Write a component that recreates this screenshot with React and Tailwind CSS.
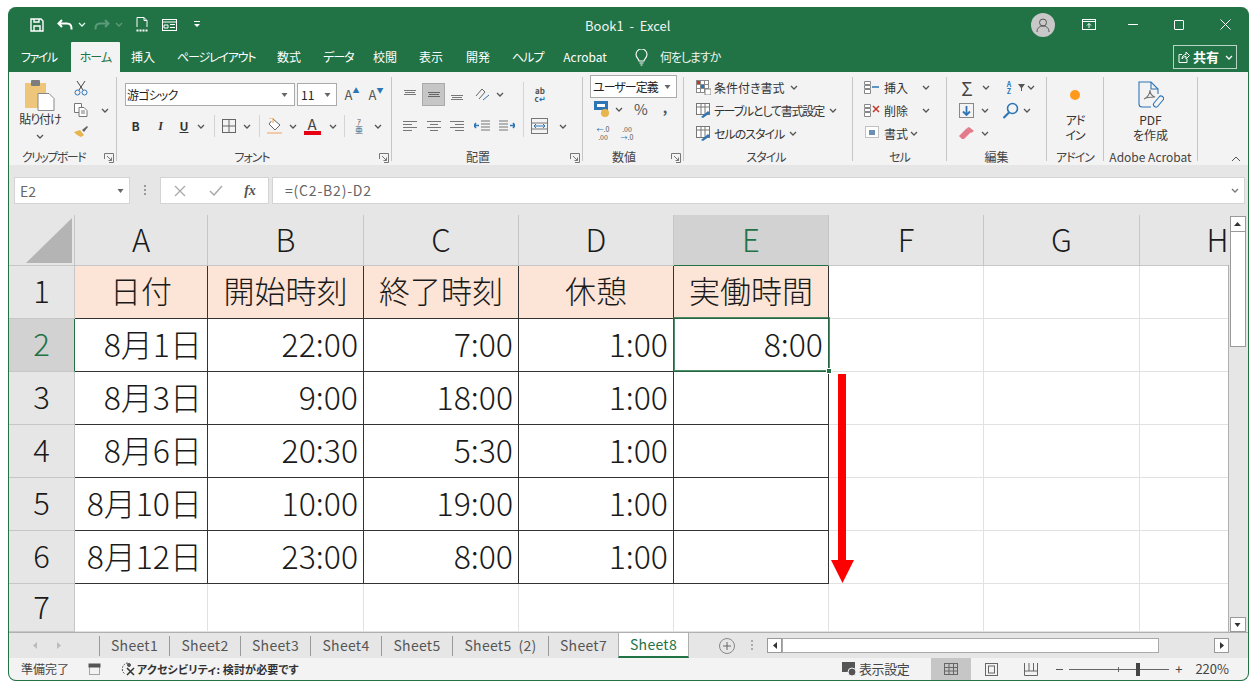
import React from 'react';

// small chevron used all over the ribbon
const Chev = ({ color = '#555' }) => (
  <svg width="8" height="5" viewBox="0 0 8 5" fill="none" stroke={color} strokeWidth="1.3"><path d="M1 1l3 3 3-3" /></svg>
);
const Tri = ({ color = '#666' }) => (
  <svg width="7" height="4" viewBox="0 0 7 4" fill={color}><path d="M.5 0h6L3.5 4z" /></svg>
);
const Launcher = () => (
  <svg width="10" height="10" viewBox="0 0 10 10" fill="none" stroke="#777" className="absolute right-[2px] top-[76px]">
    <path d="M.5 6V.5H9.5V9.5H5" /><path d="M3 3l4.5 4.5M7.5 4.5v3h-3" />
  </svg>
);
const Slot = ({ w, children, className = '' }) => (
  <div className={`flex items-center justify-center shrink-0 ${w} ${className}`}>{children}</div>
);

function Lines({ rows, color = '#777' }) {
  return (
    <svg width="14" height="12" viewBox="0 0 14 12" fill="none" stroke={color}>
      {rows.map((r, i) => <path key={i} d={`M${r[0]} ${r[1] + 0.5}H${r[2]}`} />)}
    </svg>
  );
}

function TitleBar() {
  return (
    <div className="h-[35px] flex items-center text-white shrink-0 relative pl-[20px]">
      <Slot w="w-[16px]">
        <svg width="14" height="14" viewBox="0 0 14 14" fill="none" stroke="#fff" strokeWidth="1.4"><path d="M1 1h10l2 2v10H1z" /><path d="M4 13V8h6v5M4 1v3h5V1" /></svg>
      </Slot>
      <Slot w="w-[18px]" className="ml-[11px]">
        <svg width="16" height="12" viewBox="0 0 16 12" fill="none" stroke="#fff" strokeWidth="2"><path d="M5 1L1.5 4.500 5 8M2 4.500h8c3 0 4.500 2 4.500 5v1" /></svg>
      </Slot>
      <Slot w="w-[16px]"><Chev color="#dfe" /></Slot>
      <Slot w="w-[22px]" className="ml-[1px]">
        <svg width="16" height="12" viewBox="0 0 16 12" fill="none" stroke="#5c9a7a" strokeWidth="2"><path d="M11 1l3.500 3.500L11 8M14 4.500H6C3 4.500 1.500 6.500 1.500 9.500v1" /></svg>
      </Slot>
      <Slot w="w-[12px]"><Chev color="#5c9a7a" /></Slot>
      <Slot w="w-[34px]">
        <svg width="12" height="15" viewBox="0 0 12 15" fill="none" stroke="#fff"><path d="M1 10V.5h7l3 3V10M8 .5v3h3" /><path d="M.5 13.500h11" strokeWidth="2" strokeDasharray="2 1" /></svg>
      </Slot>
      <Slot w="w-[20px]">
        <svg width="15" height="12" viewBox="0 0 15 12" fill="none" stroke="#fff"><rect x=".5" y=".5" width="14" height="11" /><path d="M1 3h13M8 5.500h5M8 8.500h5M2 6h4v3H2z" /></svg>
      </Slot>
      <Slot w="w-[36px]">
        <svg width="6" height="7" viewBox="0 0 6 7" fill="#fff"><path d="M0 0h6v1H0zM0 3h6L3 6z" /></svg>
      </Slot>
      <div className="absolute left-[576px] top-[11px] text-[13px] leading-[16px] whitespace-pre text-[#f0f5f2]">Book1  -  Excel</div>
      <div className="ml-auto flex items-center">
        <div className="w-[24px] h-[24px] rounded-full bg-[#c8c8c8] flex items-center justify-center mr-[9px]">
          <svg width="16" height="16" viewBox="0 0 16 16" fill="none" stroke="#555"><circle cx="8" cy="5.500" r="3.500" /><path d="M2 15c0-4 2.500-6 6-6s6 2 6 6" /></svg>
        </div>
        <Slot w="w-[46px]" className="pl-[3px]">
          <svg width="14" height="11" viewBox="0 0 14 11" fill="none" stroke="#fff"><rect x=".5" y=".5" width="13" height="10" /><path d="M.5 2.500h13" /><path d="M7 9V4.500M5 6.500l2-2 2 2" /></svg>
        </Slot>
        <Slot w="w-[46px]"><div className="w-[10px] h-[1px] bg-white" /></Slot>
        <Slot w="w-[46px]"><div className="w-[10px] h-[10px] border border-white rounded-[1px]" /></Slot>
        <Slot w="w-[46px]">
          <svg width="11" height="11" viewBox="0 0 11 11" stroke="#fff"><path d="M.5.5l10 10M10.500.5l-10 10" /></svg>
        </Slot>
      </div>
    </div>
  );
}

function TabBar() {
  const tabs = [
    ['ファイル', 'ml-[12px] w-[34px] tracking-[-1.5px]'],
    ['挿入', 'ml-[76px] w-[24px]'],
    ['ページレイアウト', 'ml-[22px] w-[78px] tracking-[-1.2px]'],
    ['数式', 'ml-[22px] w-[23px]'],
    ['データ', 'ml-[23px] w-[28px] tracking-[-1px]'],
    ['校閲', 'ml-[22px] w-[23px]'],
    ['表示', 'ml-[23px] w-[24px]'],
    ['開発', 'ml-[23px] w-[24px]'],
    ['ヘルプ', 'ml-[22px] w-[29px] tracking-[-1px]'],
    ['Acrobat', 'ml-[21px] w-[46px]'],
  ];
  return (
    <div className="h-[30px] flex items-center text-[12px] text-white shrink-0 relative whitespace-nowrap">
      {tabs.map(([t, c]) => <div key={t} className={`${c} text-center leading-[16px]`}>{t}</div>)}
      <div className="absolute left-[62px] top-0 w-[49px] h-[30px] bg-[#f3f3f3] text-[#217346] flex items-center justify-center tracking-[-1px] rounded-t-[1px]">ホーム</div>
      <div className="ml-[26px] w-[14px] flex justify-center">
        <svg width="13" height="17" viewBox="0 0 13 17" fill="none" stroke="#fff" strokeWidth="1.1"><path d="M4 12c0-2-3-3-3-6.500a5.500 5.500 0 0111 0C12 9 9 10 9 12zM4.500 14h4M5.500 16h2" /></svg>
      </div>
      <div className="ml-[12px] text-[#eef5f1] tracking-[-1.1px]">何をしますか</div>
      <div className="absolute left-[1164px] top-[3px] w-[64px] h-[24px] border border-[#b9d3c5] flex items-center pl-[4px] gap-[3px]">
        <svg width="12" height="12" viewBox="0 0 12 12" fill="none" stroke="#fff"><path d="M4 3.500H1v8h8V8" /><path d="M4 8c0-3 2-4.500 4-4.500V1l3.500 3.500L8 8V5.500C6 5.500 5 6.500 4 8z" /></svg>
        <span className="font-bold text-[13px]">共有</span>
        <span className="ml-[3px]"><Chev color="#fff" /></span>
      </div>
    </div>
  );
}

function Group({ w, label, launcher, children, noBorder }) {
  return (
    <div className={`${w} h-[84px] my-[5px] shrink-0 relative flex flex-col ${noBorder ? '' : 'border-r border-[#c6c6c6]'}`}>
      <div className="flex-1 min-h-0 relative">{children}</div>
      <div className="h-[14px] mb-[-3px] text-[12px] leading-[14px] text-center text-[#444] whitespace-nowrap">{label}</div>
      {launcher && <Launcher />}
    </div>
  );
}

const Row = ({ className = '', children }) => <div className={`flex items-center ${className}`}>{children}</div>;

function ClipboardGroup() {
  return (
    <Group w="w-[108px]" label={<span className="pr-[18px] tracking-[-1.5px]">クリップボード</span>} launcher>
      <div className="flex">
        <div className="w-[54px] ml-[4px] flex flex-col items-center pt-[3px]">
          <svg width="32" height="31" viewBox="0 0 32 31">
            <rect x="1" y="3" width="21" height="25" fill="#eec679" />
            <rect x="7" y="0" width="9" height="6" rx="1" fill="#7d7d7d" />
            <path d="M14 13.500h11l5 5v12H14z" fill="#fff" stroke="#888" />
          </svg>
          <div className="text-[12px] leading-[14px] text-[#333] mt-[1px] tracking-[-1px] whitespace-nowrap">貼り付け</div>
          <div className="mt-[8px]"><Chev /></div>
        </div>
        <div className="w-[20px] ml-[4px] flex flex-col items-center pt-[3px] gap-[7px]">
          <svg width="14" height="16" viewBox="0 0 14 16" fill="none" stroke="#444"><path d="M3 1l6 9M11 1L5 10" /><circle cx="3.500" cy="12.500" r="2.500" stroke="#2e75b6" /><circle cx="10.500" cy="12.500" r="2.500" stroke="#2e75b6" /></svg>
          <svg width="14" height="14" viewBox="0 0 14 14" fill="#fff" stroke="#777"><path d="M.5.500h7v9h-7z" /><path d="M5 4.500h5l3 3v6H5z" /><path d="M7 8h4M7 10h4" /></svg>
          <svg width="14" height="12" viewBox="0 0 14 12" className="mt-[2px]"><path d="M0 6l6-2 4 5-3 2C4 10 2 8 0 6z" fill="#e8b44c" /><path d="M8 4l5-4 1 1-4 5z" fill="#666" /></svg>
        </div>
        <div className="pt-[31px] pl-[10px]"><Chev /></div>
      </div>
    </Group>
  );
}

function FontGroup() {
  return (
    <Group w="w-[275px]" label={<span className="pr-[4px] tracking-[-1px]">フォント</span>} launcher>
      <Row className="pl-[8px] pt-[6px]">
        <div className="w-[170px] h-[23px] bg-white border border-[#ababab] flex items-center pl-[1px] pr-[6px] justify-between text-[12px] text-[#222] tracking-[-.8px]">
          游ゴシック<Tri />
        </div>
        <div className="ml-[2px] w-[40px] h-[23px] bg-white border border-[#ababab] flex items-center pl-[3px] pr-[5px] justify-between text-[12px] text-[#222]">
          11<Tri />
        </div>
        <Slot w="w-[24px]" className="ml-[3px] text-[13px] text-[#555]">A<span className="text-[7px] text-[#2e75b6] mb-[8px]">▲</span></Slot>
        <Slot w="w-[24px]" className="text-[13px] text-[#555]">A<span className="text-[7px] text-[#2e75b6] mb-[8px]">▼</span></Slot>
      </Row>
      <Row className="pl-[6px] mt-[8px] h-[24px] text-[#333] text-[12px]">
        <Slot w="w-[25px]" className="font-bold">B</Slot>
        <Slot w="w-[25px]" className="italic font-bold font-['Liberation_Serif']">I</Slot>
        <Slot w="w-[22px]" className="font-bold underline">U</Slot>
        <Slot w="w-[12px]"><Chev /></Slot>
        <div className="w-[1px] h-[22px] bg-[#d4d4d4] ml-[7px]" />
        <Slot w="w-[28px]">
          <svg width="14" height="14" viewBox="0 0 14 14" fill="none" stroke="#666"><rect x=".5" y=".5" width="13" height="13" /><path d="M7 0v14M0 7h14" /></svg>
        </Slot>
        <Slot w="w-[8px]"><Chev /></Slot>
        <div className="w-[1px] h-[22px] bg-[#d4d4d4] ml-[8px]" />
        <Slot w="w-[28px]" className="flex-col">
          <svg width="15" height="14" viewBox="0 0 15 14" fill="#fff" stroke="#666"><path d="M6 1l7 6-5 5-6-6z" /><path d="M2 0h4v5" stroke="#e8a03c" /></svg>
          <div className="w-[15px] h-[2px] bg-[#f4c9a8]" />
        </Slot>
        <Slot w="w-[10px]"><Chev /></Slot>
        <Slot w="w-[28px]" className="flex-col">
          <span className="text-[15px] leading-[14px] text-[#444]">A</span>
          <div className="w-[17px] h-[4px] bg-[#e60012]" />
        </Slot>
        <Slot w="w-[13px]"><Chev /></Slot>
        <div className="w-[1px] h-[22px] bg-[#d4d4d4] ml-[5px]" />
        <Slot w="w-[28px]" className="flex-col text-[8px] leading-[8px] text-[#555]"><span>ｱ</span><span>亜</span></Slot>
        <Slot w="w-[10px]"><Chev /></Slot>
      </Row>
    </Group>
  );
}

function AlignGroup() {
  const top = [[1, 1, 13], [2, 3, 12], [1, 5, 13]];
  const mid = [[1, 3, 13], [2, 5, 12], [1, 7, 13]];
  const low = [[1, 6, 13], [2, 8, 12], [1, 10, 13]];
  const left = [[0, 1, 14], [0, 4, 9], [0, 7, 14], [0, 10, 9]];
  const center = [[0, 1, 14], [3, 4, 11], [0, 7, 14], [3, 10, 11]];
  const right = [[0, 1, 14], [5, 4, 14], [0, 7, 14], [5, 10, 14]];
  return (
    <Group w="w-[191px]" label={<span className="pr-[18px]">配置</span>} launcher>
      <div className="flex h-full">
        <div className="w-[131px] pl-[6px] pt-[6px] flex flex-col gap-[8px]">
          <Row>
            <Slot w="w-[24px]"><Lines rows={top} /></Slot>
            <Slot w="w-[23px] h-[23px] bg-[#c6c6c6] border border-[#aaa]"><Lines rows={mid} color="#666" /></Slot>
            <Slot w="w-[24px]"><Lines rows={low} /></Slot>
            <Slot w="w-[26px]">
              <svg width="16" height="15" viewBox="0 0 16 15" fill="none" stroke="#666"><path d="M2 9l6-7 3 3-6 7" /><path d="M9 13l6-5" stroke="#2e75b6" /></svg>
            </Slot>
            <Slot w="w-[10px]"><Chev /></Slot>
          </Row>
          <Row className="h-[24px]">
            <Slot w="w-[24px]"><Lines rows={left} /></Slot>
            <Slot w="w-[23px]"><Lines rows={center} /></Slot>
            <Slot w="w-[24px]"><Lines rows={right} /></Slot>
            <Slot w="w-[25px]">
              <svg width="16" height="13" viewBox="0 0 16 13" fill="none"><path d="M7 1h9M7 4h9M7 7h9M7 10h9" stroke="#777" /><path d="M5 5.500H0M2 3L0 5.500 2 8" stroke="#2e75b6" strokeWidth="1.500" /></svg>
            </Slot>
            <Slot w="w-[25px]">
              <svg width="16" height="13" viewBox="0 0 16 13" fill="none"><path d="M0 1h9M0 4h9M0 7h9M0 10h9" stroke="#777" /><path d="M11 5.500h5M14 3l2 2.500L14 8" stroke="#2e75b6" strokeWidth="1.500" /></svg>
            </Slot>
          </Row>
        </div>
        <div className="w-[1px] h-[55px] mt-[5px] bg-[#d4d4d4]" />
        <div className="flex-1 pt-[6px] flex flex-col gap-[8px]">
          <Slot w="w-[32px]" className="h-[23px] flex-col text-[8px] leading-[8px] font-bold text-[#555]">
            <span>ab</span><span>c<span className="text-[#2e75b6]">↵</span></span>
          </Slot>
          <Row className="h-[24px]">
            <Slot w="w-[30px]">
              <svg width="17" height="16" viewBox="0 0 17 16" fill="none" stroke="#777"><rect x=".5" y=".5" width="16" height="15" /><path d="M0 5h17M0 11h17" /><path d="M3 8h11M5 6l-2 2 2 2M12 6l2 2-2 2" stroke="#2e75b6" /></svg>
            </Slot>
            <Slot w="w-[16px]" className="ml-[1px]"><Chev /></Slot>
          </Row>
        </div>
      </div>
    </Group>
  );
}

function NumberGroup() {
  return (
    <Group w="w-[101px]" label={<span className="pr-[18px]">数値</span>} launcher>
      <div className="ml-[7px] w-[87px] h-[23px] bg-white border border-[#ababab] flex items-center pl-[2px] pr-[5px] justify-between text-[12px] text-[#222] mt-[-2px] tracking-[-1px] whitespace-nowrap">
        ユーザー定義<Tri />
      </div>
      <Row className="pl-[10px] mt-[1px] h-[21px]">
        <Slot w="w-[18px]">
          <svg width="17" height="17" viewBox="0 0 17 17"><rect x="0" y="0" width="14" height="9" fill="#2e75b6" /><rect x="3" y="3" width="8" height="3" fill="#fff" /><circle cx="11" cy="12" r="4" fill="#e8b44c" /></svg>
        </Slot>
        <Slot w="w-[16px]"><Chev /></Slot>
        <Slot w="w-[28px]" className="text-[15px] text-[#555]">%</Slot>
        <Slot w="w-[18px]" className="font-bold text-[14px] text-[#555] ml-[1px] mb-[5px]">,</Slot>
      </Row>
      <Row className="pl-[9px] mt-[3px] h-[20px]">
        <Slot w="w-[22px]" className="flex-col text-[7px] leading-[8px] text-[#555]"><span><span className="text-[#2e75b6]">←</span>.0</span><span>.00</span></Slot>
        <Slot w="w-[26px]" className="flex-col text-[7px] leading-[8px] text-[#555]"><span>.00</span><span><span className="text-[#2e75b6]">→</span>.0</span></Slot>
      </Row>
    </Group>
  );
}

const StyleIcon = () => (
  <svg width="15" height="15" viewBox="0 0 15 15" fill="#fff" stroke="#777"><rect x=".5" y=".5" width="13" height="11" /><path d="M.5 4h13M5 .5v11M9 .5v11" /><path d="M5 14l7-6 2 2-7 5z" fill="#2e75b6" stroke="none" /></svg>
);

function StylesGroup() {
  return (
    <Group w="w-[169px]" label={<span className="pr-[4px] tracking-[-1px]">スタイル</span>}>
      <div className="pl-[12px] mt-[-1px] flex flex-col text-[12px] text-[#333] whitespace-nowrap">
        <Row className="h-[23px] gap-[3px]">
          <svg width="15" height="15" viewBox="0 0 15 15" fill="#fff" stroke="#888"><rect x=".5" y=".5" width="12" height="12" /><path d="M.5 4.500h12M.5 8.500h12M4.500.500v12M8.500.500v12" /><rect x="1" y="1" width="3" height="3" fill="#c0392b" stroke="none" /><rect x="5" y="5" width="3" height="3" fill="#2e75b6" stroke="none" /><rect x="9" y="9" width="6" height="6" fill="#fff" /></svg>
          条件付き書式<span className="ml-[2px]"><Chev /></span>
        </Row>
        <Row className="h-[23px] gap-[3px]"><StyleIcon /><span className="tracking-[-1.2px]">テーブルとして書式設定</span><span className="ml-[2px]"><Chev /></span></Row>
        <Row className="h-[23px] gap-[3px]"><StyleIcon /><span className="tracking-[-1px]">セルのスタイル</span><span className="ml-[2px]"><Chev /></span></Row>
      </div>
    </Group>
  );
}

const CellIcon = ({ mark }) => (
  <svg width="17" height="15" viewBox="0 0 17 15" fill="#fff" stroke="#888"><path d="M.5 1.500h6v3h-6zM.5 5.500h6v3h-6zM.5 9.500h6v4h-6z" />{mark === 'x'
    ? <path d="M9 3l6 6M15 3l-6 6" stroke="#c0392b" strokeWidth="1.500" />
    : <path d="M8 7h7" stroke="#2e75b6" strokeWidth="1.500" />}</svg>
);

function CellsGroup() {
  return (
    <Group w="w-[94px]" label={<span className="tracking-[-1px]">セル</span>}>
      <div className="pl-[11px] mt-[-1px] text-[12px] text-[#333]">
        <Row className="h-[23px]"><CellIcon /><span className="ml-[3px]">挿入</span><span className="ml-[14px]"><Chev /></span></Row>
        <Row className="h-[23px]"><CellIcon mark="x" /><span className="ml-[3px]">削除</span><span className="ml-[14px]"><Chev /></span></Row>
        <Row className="h-[23px]">
          <svg width="17" height="15" viewBox="0 0 17 15" fill="#fff" stroke="#888"><rect x="1.500" y=".5" width="13" height="11" strokeDasharray="1 1" /><rect x="5" y="4" width="6" height="5" fill="#6a8fb5" stroke="none" /></svg>
          <span className="ml-[3px]">書式</span><span className="ml-[2px]"><Chev /></span>
        </Row>
      </div>
    </Group>
  );
}

function EditGroup() {
  return (
    <Group w="w-[100px]" label="編集">
      <div className="pl-[12px] mt-[-1px] text-[#444]">
        <Row className="h-[23px]">
          <Slot w="w-[16px]" className="text-[19px] leading-none">Σ</Slot>
          <Slot w="w-[22px]"><Chev /></Slot>
          <Slot w="w-[18px]" className="ml-[3px] flex-col text-[7px] leading-[7px] font-bold text-[#2e75b6]"><span>A</span><span>Z</span></Slot>
          <svg width="7" height="7" viewBox="0 0 7 7" fill="#555"><path d="M0 0h7L4 4v3H3V4z" /></svg>
          <Slot w="w-[12px]"><Chev /></Slot>
        </Row>
        <Row className="h-[23px]">
          <div className="w-[15px] h-[15px] border border-[#888] flex items-center justify-center">
            <svg width="9" height="10" viewBox="0 0 9 10" fill="none" stroke="#2e75b6" strokeWidth="1.800"><path d="M4.500 0v9M1 5.500l3.500 3.500L8 5.500" /></svg>
          </div>
          <Slot w="w-[18px]" className="ml-[2px]"><Chev /></Slot>
          <Slot w="w-[26px]" className="ml-[3px]">
            <svg width="17" height="17" viewBox="0 0 17 17" fill="none" stroke="#2e75b6" strokeWidth="1.600"><circle cx="10.500" cy="6.500" r="5" /><path d="M7 10.500L1.500 16" strokeWidth="2.200" /></svg>
          </Slot>
          <Slot w="w-[8px]"><Chev /></Slot>
        </Row>
        <Row className="h-[23px]">
          <svg width="16" height="13" viewBox="0 0 16 13"><path d="M0 9l8-8 4 4-7 7H3z" fill="#e57a8a" /><path d="M8 1l2-1 5 4-3 2z" fill="#e57a8a" /></svg>
          <Slot w="w-[18px]" className="ml-[1px]"><Chev /></Slot>
        </Row>
      </div>
    </Group>
  );
}

function Ribbon() {
  return (
    <div className="h-[93px] bg-[#f3f3f3] flex shrink-0 relative">
      <ClipboardGroup />
      <FontGroup />
      <AlignGroup />
      <NumberGroup />
      <StylesGroup />
      <CellsGroup />
      <EditGroup />
      <Group w="w-[57px]" label={<span className="tracking-[-1px]">アドイン</span>}>
        <div className="flex flex-col items-center text-[12px] leading-[15px] text-[#333]">
          <div className="w-[10px] h-[10px] rounded-full bg-[#ff9a1f] mt-[13px]" />
          <div className="mt-[12px] text-center tracking-[-1px]">アド<br />イン</div>
        </div>
      </Group>
      <Group w="w-[94px]" label="Adobe Acrobat">
        <div className="flex flex-col items-center text-[12px] leading-[15px] text-[#333]">
          <svg width="26" height="29" viewBox="0 0 26 29" fill="none" stroke="#2e75b6" strokeWidth="1.100" className="mt-[4px]">
            <path d="M13 26H4a3 3 0 01-3-3V1h12l7 7v5" /><path d="M13 1v7h7" />
            <path d="M6 18c3-1 6-5 6-9 0 4 2 6 5 7-3 0-8 0-11 2z" stroke="#777" />
            <path d="M16 22l5-6a2.500 2.500 0 014 3l-5 6a2.500 2.500 0 01-4-3z" />
          </svg>
          <div className="mt-[2px] text-center">PDF<br />を作成</div>
        </div>
      </Group>
      <div className="absolute right-[7px] bottom-[3px]">
        <svg width="10" height="6" viewBox="0 0 10 6" fill="none" stroke="#555"><path d="M1 5l4-4 4 4" /></svg>
      </div>
    </div>
  );
}

function FormulaBar() {
  return (
    <div className="h-[50px] bg-[#e6e6e6] flex items-start pt-[12px] pl-[5px] shrink-0 text-[14px] text-[#666]">
      <div className="w-[116px] h-[27px] bg-white border border-[#d4d4d4] flex items-center justify-between pl-[5px] pr-[5px]">
        <span className="mt-[2px]">E2</span><Tri />
      </div>
      <div className="w-[30px] h-[27px] flex items-center justify-center">
        <svg width="3" height="11" viewBox="0 0 3 11" fill="#999"><rect width="2" height="2" /><rect y="4" width="2" height="2" /><rect y="8" width="2" height="2" /></svg>
      </div>
      <div className="w-[109px] h-[27px] bg-white border border-[#d4d4d4] flex items-center">
        <Slot w="w-[38px]"><svg width="12" height="12" viewBox="0 0 12 12" stroke="#aaa" strokeWidth="1.300"><path d="M1 1l10 10M11 1L1 11" /></svg></Slot>
        <Slot w="w-[34px]"><svg width="14" height="11" viewBox="0 0 14 11" fill="none" stroke="#aaa" strokeWidth="1.500"><path d="M1 6l4 4 8-9" /></svg></Slot>
        <Slot w="w-[34px]" className="italic font-bold font-['Liberation_Serif'] text-[#555]">fx</Slot>
      </div>
      <div className="ml-[3px] w-[973px] h-[27px] bg-white border border-[#d4d4d4] flex items-center justify-between pl-[12px] pr-[5px]">
        <span className="tracking-[.8px]">=(C2-B2)-D2</span><Chev color="#777" />
      </div>
    </div>
  );
}

const COLS = ['A', 'B', 'C', 'D', 'E', 'F', 'G', 'H'];
const TABLE = [
  ['日付', '開始時刻', '終了時刻', '休憩', '実働時間'],
  ['8月1日', '22:00', '7:00', '1:00', '8:00'],
  ['8月3日', '9:00', '18:00', '1:00', ''],
  ['8月6日', '20:30', '5:30', '1:00', ''],
  ['8月10日', '10:00', '19:00', '1:00', ''],
  ['8月12日', '23:00', '8:00', '1:00', ''],
  ['', '', '', '', ''],
];

function Sheet() {
  return (
    <div className="h-[417px] shrink-0 flex bg-[#e6e6e6]">
      <div className="w-[1220px] overflow-hidden relative">
        <div className="grid grid-cols-[66px_133px_156px_155px_155px_155px_155px_156px_156px] grid-rows-[51px_53px_53px_53px_53px_53px_53px_48px] text-[31px] text-[#1a1a1a] leading-none font-light bg-white">
          <div className="bg-[#e6e6e6] border-r border-b border-[#c6c6c6] flex items-end justify-end pr-[2px] pb-[2px]">
            <svg width="46" height="45" viewBox="0 0 46 45" fill="#b4b4b4"><path d="M46 0v45H0z" /></svg>
          </div>
          {COLS.map((c) => (
            <div key={c} className={`border-r border-b border-[#c6c6c6] flex items-center justify-center pb-[3px] ${c === 'E' ? 'bg-[#d2d2d2] text-[#217346] border-b-[#217346]' : 'bg-[#e6e6e6]'}`}>{c}</div>
          ))}
          {TABLE.map((row, r) => (
            <React.Fragment key={r}>
              <div className={`border-r border-b border-[#c6c6c6] flex items-center justify-center pb-[5px] ${r === 1 ? 'bg-[#d2d2d2] text-[#217346] border-r-[#217346]' : 'bg-[#e6e6e6]'}`}>{r + 1}</div>
              {row.map((v, c) => (
                <div key={c} className={`flex items-center border-r border-b pb-[5px] ${r < 6 ? 'border-[#333]' : 'border-[#e1e1e1]'} ${r === 0 ? 'bg-[#fce4d6] justify-center' : 'justify-end pr-[5px] text-[32px]'} whitespace-nowrap`}>{v}</div>
              ))}
              <div className="border-r border-b border-[#e1e1e1]" />
              <div className="border-r border-b border-[#e1e1e1]" />
              <div className="border-r border-b border-[#e1e1e1]" />
            </React.Fragment>
          ))}
        </div>
        <div className="absolute right-0 top-[50px] bottom-0 w-[1px] bg-[#b0b0b0]" />
        {/* active cell outline */}
        <div className="absolute left-[664px] top-[102px] w-[157px] h-[55px] border-2 border-[#217346] opacity-80" />
        <div className="absolute left-[817px] top-[153px] w-[6px] h-[6px] bg-[#217346] border border-white" />
        {/* red arrow drawn on the picture */}
        <svg width="24" height="209" viewBox="0 0 24 209" className="absolute left-[822px] top-[159px]" fill="#ff0000">
          <rect x="7" y="0" width="8" height="186" />
          <path d="M0 186h23l-11.500 23z" />
        </svg>
      </div>
      <div className="flex-1 flex flex-col items-center pt-[1px] pr-[2px]">
        <div className="w-[16px] h-[16px] bg-white border border-[#999] flex items-center justify-center">
          <svg width="7" height="4" viewBox="0 0 7 4" fill="#333"><path d="M3.500 0L7 4H0z" /></svg>
        </div>
        <div className="w-[16px] h-[115px] bg-white border border-[#999] border-t-0" />
        <div className="flex-1" />
        <div className="w-[16px] h-[15px] bg-white border border-[#999] flex items-center justify-center">
          <Tri color="#333" />
        </div>
      </div>
    </div>
  );
}

function SheetTabs() {
  const sheets = [
    ['Sheet1', 'w-[70px]'],
    ['Sheet2', 'w-[71px]'],
    ['Sheet3', 'w-[70px]'],
    ['Sheet4', 'w-[71px]'],
    ['Sheet5', 'w-[71px]'],
    ['Sheet5  (2)', 'w-[96px]'],
    ['Sheet7', 'w-[70px]'],
  ];
  return (
    <div className="h-[26px] bg-[#e6e6e6] border-t border-[#b0b0b0] flex items-center text-[14px] tracking-[.3px] text-[#555] shrink-0 relative">
      <div className="w-[90px] flex items-center pl-[24px] gap-[20px] text-[#bbb]">
        <svg width="4" height="7" viewBox="0 0 4 7" fill="#bbb"><path d="M4 0v7L0 3.500z" /></svg>
        <svg width="4" height="7" viewBox="0 0 4 7" fill="#bbb"><path d="M0 0v7l4-3.500z" /></svg>
      </div>
      {sheets.map(([s, w]) => (
        <div key={s} className={`h-[20px] border-l border-[#9a9a9a] ${w} flex items-center justify-center whitespace-pre`}>{s}</div>
      ))}
      <div className="h-[25px] w-[71px] -mt-[1px] bg-white border-l border-r border-[#b0b0b0] border-b-2 border-b-[#217346] text-[#217346] flex items-center justify-center">Sheet8</div>
      <div className="ml-[30px] w-[16px] h-[16px] rounded-full border border-[#888] flex items-center justify-center text-[#666]">
        <svg width="8" height="8" viewBox="0 0 8 8" stroke="#666"><path d="M4 0v8M0 4h8" /></svg>
      </div>
      <div className="ml-[16px]">
        <svg width="3" height="11" viewBox="0 0 3 11" fill="#aaa"><rect width="2" height="2" /><rect y="4" width="2" height="2" /><rect y="8" width="2" height="2" /></svg>
      </div>
      <div className="ml-[13px] w-[15px] h-[15px] bg-white border border-[#999] flex items-center justify-center">
        <svg width="4" height="7" viewBox="0 0 4 7" fill="#333"><path d="M4 0v7L0 3.500z" /></svg>
      </div>
      <div className="w-[377px] h-[15px] bg-white border border-[#aaa]" />
      <div className="ml-[55px] w-[15px] h-[15px] bg-white border border-[#999] flex items-center justify-center">
        <svg width="4" height="7" viewBox="0 0 4 7" fill="#333"><path d="M0 0v7l4-3.500z" /></svg>
      </div>
    </div>
  );
}

function StatusBar() {
  return (
    <div className="flex-1 min-h-0 bg-[#f3f3f3] flex items-center text-[12px] text-[#444] whitespace-nowrap">
      <span className="ml-[12px]">準備完了</span>
      <span className="ml-[19px]">
        <svg width="13" height="13" viewBox="0 0 13 13" fill="none" stroke="#555"><rect x="1.500" y="2.500" width="10" height="9" strokeDasharray="1 1" /><rect x="1" y="1" width="11" height="3" fill="#555" /></svg>
      </span>
      <span className="ml-[18px]">
        <svg width="17" height="14" viewBox="0 0 17 14" fill="none" stroke="#555"><path d="M9 1a6 6 0 00-3 11" strokeDasharray="2 1" /><circle cx="10" cy="3" r="1.500" fill="#555" /><path d="M8 6l7 7M15 6l-7 7" strokeWidth="1.500" stroke="#333" /></svg>
      </span>
      <span className="ml-[1px] text-[11px] font-bold text-[#333] tracking-[.15px]">アクセシビリティ: 検討が必要です</span>
      <div className="ml-auto flex items-center h-full">
        <svg width="15" height="14" viewBox="0 0 15 14" fill="#555"><rect width="13" height="10" /><circle cx="10" cy="10" r="4" stroke="#f3f3f3" /></svg>
        <span className="ml-[2px] mr-[22px] text-[13px] tracking-[-.4px]">表示設定</span>
        <div className="w-[40px] h-full bg-[#c6c6c6] flex items-center justify-center">
          <svg width="14" height="12" viewBox="0 0 14 12" fill="none" stroke="#666"><rect x=".5" y=".5" width="13" height="11" /><path d="M.5 4.500h13M.5 8h13M5 .5v11M9.500 .5v11" /></svg>
        </div>
        <Slot w="w-[40px]"><svg width="13" height="13" viewBox="0 0 13 13" fill="none" stroke="#666"><rect x=".5" y=".5" width="12" height="12" /><rect x="3.500" y="3" width="6" height="7" /></svg></Slot>
        <Slot w="w-[40px]"><svg width="14" height="13" viewBox="0 0 14 13" fill="none" stroke="#666"><path d="M.5 0v12.500h13V0M.5 8h13M5 0v8M9.500 0v8" /></svg></Slot>
        <span className="ml-[5px] w-[7px] h-[1px] bg-[#555]" />
        <div className="ml-[6px] w-[100px] h-[1px] bg-[#666] relative">
          <div className="absolute left-[49px] top-[-2px] w-[1px] h-[5px] bg-[#666]" />
          <div className="absolute left-[67px] top-[-6px] w-[4px] h-[13px] bg-[#444]" />
        </div>
        <span className="ml-[5px] text-[13px] w-[9px] text-center">+</span>
        <span className="ml-[12px] mr-[19px] text-[13px]">220%</span>
      </div>
    </div>
  );
}

export default function App() {
  return (
    <div className="w-[1257px] h-[688px] bg-white pl-[8px] pt-[7px] font-['Noto_Sans_CJK_JP','Noto_Sans',sans-serif] [font-feature-settings:'palt'] overflow-hidden">
      <div className="w-[1241px] h-[674px] rounded-[8px] overflow-hidden border border-t-0 border-[#217346] bg-[#217346] flex flex-col">
        <TitleBar />
        <TabBar />
        <Ribbon />
        <FormulaBar />
        <Sheet />
        <SheetTabs />
        <StatusBar />
      </div>
    </div>
  );
}
